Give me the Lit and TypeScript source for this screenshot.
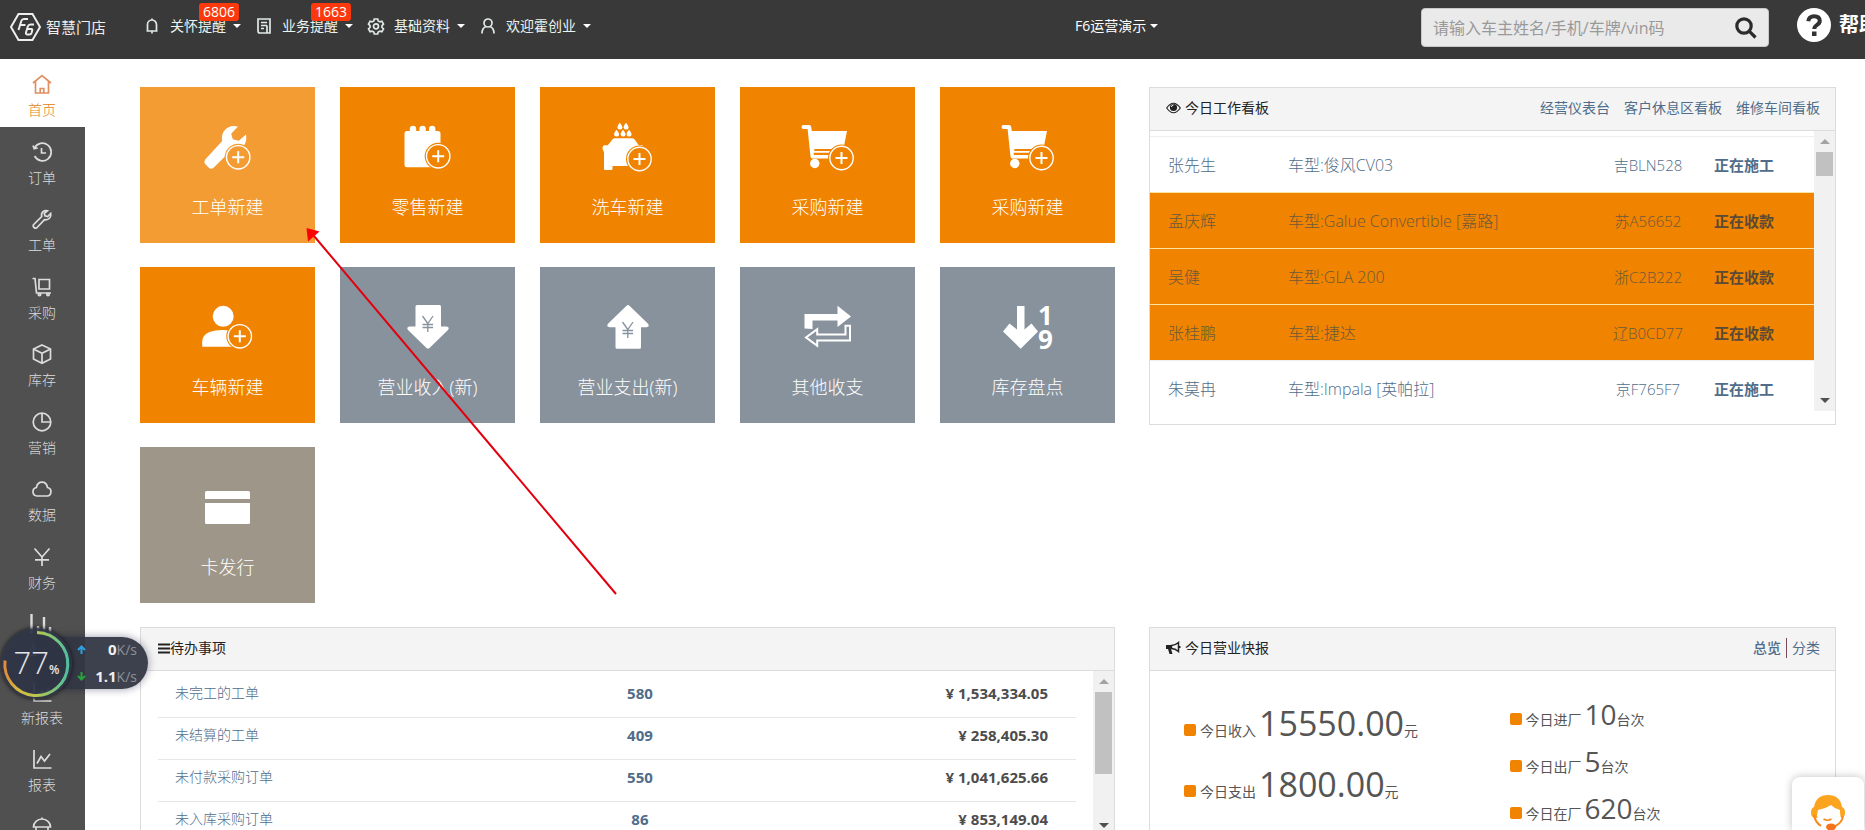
import { LitElement, html, svg, css } from "lit";
import { customElement } from "lit/decorators.js";
import { classMap } from "lit/directives/class-map.js";

const plus = (cx: number, cy: number) => svg`
  <circle class="knock" cx=${cx} cy=${cy} r="13.5"></circle>
  <circle class="ring" cx=${cx} cy=${cy} r="11.7"></circle>
  <path class="ring bold" d="M${cx - 6} ${cy}h12M${cx} ${cy - 6}v12"></path>`;

const cart = svg`
  <path d="M5.5 0H11q1.8 0 2.2 1.8L13.8 6H49l-3.6 18H16.2l.2 2H33v1.8H15.5L16 30h20v3.6H15q-2.2 0-2.5-2.2L9.6 4H5.5a2 2 0 0 1 0-4z"></path>
  <circle cx="16.8" cy="38.5" r="4.7"></circle>${plus(43.5, 33)}`;

const tileIcons: Record<string, unknown> = {
  wrench: svg`<path d="M40 1.6C31-1.5 22 6 24.2 16L7.2 34.4q-1.8 2.4 0 4.6l3.6 3.8q2.4 2 4.8 0L33 25.6C43 27.5 50 19 48 9.6L40.8 15.8 34.8 14.3 33.2 8.8z"></path>${plus(40.2, 32.3)}`,
  retail: svg`<path d="M9 6h2.8V4a3.2 3.2 0 0 1 6.4 0v2h3.2V4a3.2 3.2 0 0 1 6.4 0v2h3.2V4a3.2 3.2 0 0 1 6.4 0v2H40q2.5 0 2.5 2.5v31.3q0 2.5-2.5 2.5H9q-2.5 0-2.5-2.5V8.5Q6.5 6 9 6z"></path>${plus(40.2, 31.3)}`,
  wash: svg`<path d="M17 13.3h17q1.6 0 2.6 1.3l4.2 5.7H44q1.5 0 1.5 2l-1 2V41H14.5v3q0 1-1 1H7q-1 0-1-1V27l-1.5-3q0-3.7 2-3.7h3.3l4.6-5.7q1-1.3 2.6-1.3z"></path>
    <path d="M21.8-2.2q2.6 3 2.6 4.2a2.3 2.3 0 0 1-5 0q0-1.4 2.4-4.2zM28-2.2q2.6 3 2.6 4.2a2.3 2.3 0 0 1-5 0q0-1.4 2.4-4.2zM18.5 4.8q2.6 3 2.6 4.2a2.3 2.3 0 0 1-5 0q0-1.4 2.4-4.2zM25 4.8q2.6 3 2.6 4.2a2.3 2.3 0 0 1-5 0q0-1.4 2.4-4.2zM31 4.8q2.6 3 2.6 4.2a2.3 2.3 0 0 1-5 0q0-1.4 2.4-4.2z"></path>${plus(41.5, 34)}`,
  cart,
  person: svg`<circle cx="25.2" cy="11.3" r="10.5"></circle><path d="M4.2 41.7V37q0-12 21-12 16 0 16 10v6.7z"></path>${plus(41.8, 31.3)}`,
  down: svg`<path d="M19 0h22.5q1.5 0 1.5 1.5V21.5h5.5q3.5.5 1.5 3.5L31.5 43q-1.5 1.2-3 0L10 25q-2-3 1.5-3.5h6V1.5Q17.5 0 19 0z"></path><path class="mark" d="M24.5 11l5.3 7.5L35 11M24.5 19.5h10.6M24.5 22.5h10.6M29.8 18.5V27"></path>`,
  up: svg`<path d="M19 43.7h22.5q1.5 0 1.5-1.5V22.2h5.5q3.5-.5 1.5-3.5L31.5.7q-1.5-1.2-3 0L10 18.7q-2 3 1.5 3.5h6v20q0 1.5 1.5 1.5z"></path><path class="mark" d="M24.5 17l5.3 7.5L35 17M24.5 25.5h10.6M24.5 28.5h10.6M29.8 24.5V33"></path>`,
  loop: svg`<path d="M6.5 9H39.5V.7L53 11.5 39.5 22v-6.5H14.5V24l-8-.5z"></path><path class="line" d="M47.5 20.8v8.7H19.2v-5.2L8 32.4l11.2 8.3v-5.1H52V20.8z"></path>`,
  sort: svg`<path d="M19 1h7.5v23.5l7-6L40 26.5 22.7 43.7 5 26.5l6.5-8 7.500 6z"></path><text class="digit" x="40" y="20">1</text><text class="digit" x="40" y="44">9</text>`,
  card: svg`<path d="M8.5 6h42q1.5 0 1.5 1.5V14H7V7.5Q7 6 8.500 6zM7 18h45v19.5q0 1.5-1.5 1.5h-42Q7 39 7 37.5z"></path>`,
};

const tiles = [
  { label: "工单新建", icon: "wrench", tone: "light" },
  { label: "零售新建", icon: "retail", tone: "orange" },
  { label: "洗车新建", icon: "wash", tone: "orange" },
  { label: "采购新建", icon: "cart", tone: "orange" },
  { label: "采购新建", icon: "cart", tone: "orange" },
  { label: "车辆新建", icon: "person", tone: "orange" },
  { label: "营业收入(新)", icon: "down", tone: "slate" },
  { label: "营业支出(新)", icon: "up", tone: "slate" },
  { label: "其他收支", icon: "loop", tone: "slate" },
  { label: "库存盘点", icon: "sort", tone: "slate" },
  { label: "卡发行", icon: "card", tone: "taupe" },
];

const side = [
  { label: "首页", icon: svg`<path d="M1 9l9-7.5L19 9M3.5 7.5V19h13V7.5M8.2 19v-4.5h3.6V19"></path>` },
  { label: "订单", icon: svg`<path d="M2.5 6.2A8.8 8.8 0 1 1 2.6 14M1 3.5l1.2 3.2 3.5-.7M9.5 6v5h4.5"></path>` },
  { label: "工单", icon: svg`<path d="M15.5 1.8c-3.2-1-6.8 1.5-5.8 5.7L1.3 16q-.5 1.5.7 2.5t2.5.5L12.5 10.7c4 .7 7.2-2.5 6.2-6.2l-3 3-2.8-.8-.6-2.3z"></path>` },
  { label: "采购", icon: svg`<path d="M.5 1.5h2.5l1.5 14.5h14.5M7 2.5h10.5v9.5H7z"></path><circle cx="7.5" cy="17.5" r="1.2"></circle><circle cx="16" cy="17.5" r="1.2"></circle>` },
  { label: "库存", icon: svg`<path d="M10 1l8.5 4v10L10 19.2 1.5 15V5zM1.5 5l8.5 4.2L18.5 5M10 9.2v10"></path>` },
  { label: "营销", icon: svg`<circle cx="10" cy="10" r="8.8"></circle><path d="M10 1.2V10h8.800"></path>` },
  { label: "数据", icon: svg`<path d="M5 17a4.3 4.3 0 0 1-.6-8.5Q5.5 3.2 10 3.2t5.5 5.3A4.3 4.3 0 0 1 15 17z"></path>` },
  { label: "财务", icon: svg`<path d="M2.5 1.5L10 10l7.500-8.500M10 10v9M3 12.800h14"></path>` },
  { label: "业绩", icon: svg`<path stroke-width="2.400" d="M-.5 0v19M6 12v7M12 3v16M18 13v6"></path>` },
  { label: "新报表", icon: svg`<path d="M2 1v18h17.5M6 14l4-5 3 3 5-7"></path>` },
  { label: "报表", icon: svg`<path d="M2 1v18h17.5M5 14.5l4-7 3.5 4.5 5.5-7"></path>` },
  { label: "", icon: svg`<path d="M1.5 10a8.5 8 0 0 1 17 0zM10 2V.5M4 10v7h12v-7"></path>` },
];

const board = [
  { name: "张先生", model: "车型:俊风CV03", plate: "吉BLN528", status: "正在施工", due: false },
  { name: "孟庆辉", model: "车型:Galue Convertible [嘉路]", plate: "苏A56652", status: "正在收款", due: true },
  { name: "吴健", model: "车型:GLA 200", plate: "浙C2B222", status: "正在收款", due: true },
  { name: "张桂鹏", model: "车型:捷达", plate: "辽B0CD77", status: "正在收款", due: true },
  { name: "朱莫冉", model: "车型:Impala [英帕拉]", plate: "京F765F7", status: "正在施工", due: false },
];

const todos = [
  ["未完工的工单", "580", "1,534,334.05"],
  ["未结算的工单", "409", "258,405.30"],
  ["未付款采购订单", "550", "1,041,625.66"],
  ["未入库采购订单", "86", "853,149.04"],
];

const menus = [
  { label: "关怀提醒", badge: "6806", icon: svg`<path d="M3.5 13V6.500a4.500 4.500 0 0 1 9 0V13M2.500 13h11M8 13v2.500M8 2V.5"></path>` },
  { label: "业务提醒", badge: "1663", icon: svg`<path d="M2 1h12v14H4q-2 0-2-2zM5 4.500h6M5 7.500h6M5 10.500h3M11 7.500V15"></path>` },
  { label: "基础资料", badge: "", icon: svg`<path d="M6.300 1h3.400l.5 2 1.700.9 2-.6 1.600 2.800-1.500 1.500v1.800l1.500 1.500-1.600 2.800-2-.6-1.700.9-.5 2H6.300l-.5-2-1.700-.9-2 .6L.5 10.900 2 9.400V7.600L.5 6.100l1.600-2.800 2 .6L5.800 3z"></path><circle cx="8" cy="8.300" r="2.500"></circle>` },
  { label: "欢迎霍创业", badge: "", icon: svg`<path d="M2 15.500q0-5.500 4-7M14 15.500q0-5.500-4-7"></path><circle cx="8" cy="5" r="4"></circle>` },
];

@customElement("scroll-rail")
export class ScrollRail extends LitElement {
  static styles = css`
    :host { display: flex; flex-direction: column; flex: none; width: 21px; background: #f1f1f1; }
    .cap { display: grid; place-items: center; height: 21px; flex: none; }
    .up, .down { border: 5px solid transparent; width: 0; height: 0; box-sizing: border-box; }
    .up { border-top: 0; border-bottom-color: #a3a3a3; }
    .down { border-bottom: 0; border-top-color: #505050; }
    .track { flex: 1; min-height: 0; padding: 0 2px; }
    .thumb { background: #c1c1c1; }
  `;
  static properties = { thumb: { type: Number } };
  declare thumb: number;
  render() {
    return html`<div class="cap"><div class="up"></div></div>
      <div class="track"><div class="thumb" style="height:${this.thumb}%"></div></div>
      <div class="cap"><div class="down"></div></div>`;
  }
}

@customElement("app-root")
export class AppRoot extends LitElement {
  static styles = css`
    :host {
      display: block; position: relative; height: 100vh; overflow: hidden; background: #fff; color: #333;
      font: 14px/20px "Open Sans", "Noto Sans CJK SC", sans-serif;
    }
    * { box-sizing: border-box; }
    a { color: #4f6d8a; text-decoration: none; }
    svg { display: block; overflow: visible; }
    button { font: inherit; border: 0; padding: 0; background: none; color: inherit; cursor: pointer; }
    table { border-collapse: collapse; width: 100%; table-layout: fixed; }
    th { font-weight: inherit; text-align: left; }
    td, th { padding: 0; }

    .top { display: grid; grid-template-columns: 1075fr 346fr 444px; height: 59px; background: #393939; color: #fff; overflow: hidden; }
    .left { display: flex; }
    .brand { display: flex; align-items: center; gap: 5px; height: 54px; padding-left: 10px; width: 144px; color: #eee; font-size: 15px; }
    .brand svg { fill: none; stroke: #eee; stroke-width: 2; }
    .menu { position: relative; display: flex; align-items: center; height: 52px; margin-right: 15px; color: #eaf3ee; }
    .menu .glyph { fill: none; stroke: #dfeae5; stroke-width: 1.7; margin-right: 10px; }
    .caret { width: 0; height: 0; border: 4px solid transparent; border-top-color: #fff; border-bottom: 0; margin-left: 7px; }
    .title .caret { margin-left: 4px; }
    .badge { position: absolute; right: 2px; top: 3px; padding: 0 4px; border-radius: 3px; background: #fb390d; color: #fff; line-height: 18px; }
    .title { display: flex; align-items: center; height: 52px; }
    .right { display: flex; white-space: nowrap; padding-top: 8px; }
    .search { display: flex; align-items: center; width: 348px; height: 39px; flex: none; border: 1px solid #c8c8c8; border-radius: 4px; background: #eaeaea; padding: 0 11px; }
    .search input { flex: 1; min-width: 0; border: 0; outline: 0; background: none; font: 16px/24px "Open Sans", "Noto Sans CJK SC", sans-serif; padding: 0; color: #333; }
    .search input::placeholder { color: #999; opacity: 1; }
    .help { display: flex; align-items: center; gap: 8px; height: 34px; margin-left: 28px; color: #fff; font-size: 20px; font-weight: 700; }

    .shell { display: flex; align-items: flex-start; }
    .side { flex: none; width: 85px; height: 810px; display: flex; flex-direction: column; background: #505050; font-weight: 300; }
    .side a { flex: 1; display: flex; flex-direction: column; align-items: center; gap: 6px; padding: 15px 1px 0 0; color: #dcdcdc; min-height: 0; }
    .side svg { fill: none; stroke: currentColor; stroke-width: 1.7; }
    .side a.on { background: #fff; color: #df8118; }
    .side a.on svg { stroke: #e09062; }

    .main { flex: 1; min-width: 0; display: grid; grid-template-columns: 975fr 687fr; gap: 24px 34px; align-items: start; padding: 28px 29px 0 55px; }
    .tiles { display: grid; grid-template-columns: repeat(5, 1fr); gap: 24px 25px; }
    .tile { --tile: #f08300; display: flex; flex-direction: column; align-items: center; gap: 20px; height: 156px; padding-top: 38px; background: var(--tile); color: #fff; font-size: 18px; line-height: 24px; font-weight: 300; }
    .tile.light { --tile: #f39c33; }
    .tile.slate { --tile: #88929c; }
    .tile.taupe { --tile: #9e9789; }
    .tile svg { fill: #fff; }
    .knock { fill: var(--tile); }
    .ring { fill: none; stroke: #fff; stroke-width: 1.4; }
    .ring.bold { stroke-width: 2; }
    .mark { fill: none; stroke: var(--tile); stroke-width: 1.3; }
    .line { fill: none; stroke: #fff; stroke-width: 2; }
    .digit { font: 700 26px "Open Sans", sans-serif; }

    .panel { border: 1px solid #dcdcdc; background: #fff; min-width: 0; }
    .head { display: flex; align-items: center; justify-content: space-between; height: 43px; padding: 0 15px 2px 16px; background: #f4f4f4; border-bottom: 1px solid #dcdcdc; }
    .head h2 { display: flex; align-items: center; gap: 4px; margin: 0; font: inherit; color: #222; }
    .links { display: flex; gap: 14px; }
    .split { display: flex; gap: 5px; }
    .split i { width: 1px; height: 20px; background: #7c4a5a; }
    .split b { font-weight: 500; }
    .scroll { display: flex; }
    .view { flex: 1; min-width: 0; overflow: hidden; }

    .board .scroll { height: 280px; margin-bottom: 13px; }
    .board .view { padding-top: 5px; font-size: 16px; font-weight: 300; color: #4f6d8a; }
    .board tr { height: 56px; border-top: 1px solid #eeeeee; white-space: nowrap; }
    .board tr.due { background: #f08300; color: #6b5a3c; border-top-color: #f9e3a8; }
    .board th { padding-left: 18px; }
    .plate { font-size: 15px; text-align: center; }
    .state { padding-left: 28px; font-size: 15px; font-weight: 700; }
    .due .state { color: #5b4a35; }
    .c1 { width: 138px; } .c3 { width: 76px; } .c4 { width: 128px; }

    .todo .scroll { height: 165px; }
    .todo .view { padding: 5px 17px 0; }
    .todo .head { padding-left: 17px; }
    .todo .head h2 { gap: 0; }
    .todo tr { border-bottom: 1px solid #e6e8e8; }
    .todo td, .todo th { padding-top: 7px; padding-bottom: 14px; line-height: 20px; }
    .todo th { width: 40%; padding-left: 17px; font-weight: 300; }
    .count { width: 25%; text-align: center; font-size: 15px; font-weight: 700; }
    .sum { text-align: right; font-size: 15px; font-weight: 700; color: #4c4c4c; }
    .todo td.sum { padding-right: 28px; }

    .report { display: grid; grid-template-columns: 1fr 1fr; padding: 23px 0 0 34px; color: #555; height: 165px; }
    .report p { display: flex; align-items: baseline; margin: 0; }
    .report p::before { content: ""; width: 12px; height: 12px; border-radius: 2px; background: #f08300; margin-right: 4px; }
    .money p { height: 61px; line-height: 58px; }
    .money b { font-size: 34px; }
    .cars p { height: 47px; line-height: 40px; }
    .cars b { font-size: 28px; }
    .report b { font-weight: 400; margin-left: 3px; }

    .pointer { position: absolute; left: 300px; top: 220px; pointer-events: none; }
    .meter { position: absolute; left: 0; top: 628px; width: 148px; height: 71px; }
    .pill { position: absolute; left: 36px; right: 0; top: 9px; height: 52px; border-radius: 0 26px 26px 0; background: #333743f2; box-shadow: 0 0 8px #00003066; color: #8e929b; display: grid; grid-template-columns: 14px 1fr; align-content: center; padding: 0 11px 0 41px; line-height: 26px; }
    .pill span { text-align: right; }
    .pill b { color: #f0f0f0; font-size: 15px; }
    .pill svg { align-self: center; }
    .dial { position: absolute; left: 1px; top: 0; width: 71px; height: 71px; border-radius: 50%; background: #2f3446ee; box-shadow: 0 0 4px #101018; display: flex; align-items: baseline; justify-content: center; color: #e4e6ea; font-size: 31px; font-weight: 300; line-height: 69px; }
    .dial small { font-size: 12px; font-weight: 600; }
    .dial svg { position: absolute; inset: 0; fill: none; stroke-width: 3; }
    .service { position: absolute; right: 1px; bottom: 0; width: 72px; height: 53px; border-radius: 8px 8px 0 0; background: #fff; box-shadow: 0 0 8px #00000040; display: grid; justify-items: center; padding-top: 16px; }
  `;

  render() {
    return html`
      <header class="top">
        <div class="left">
          <div class="brand">
            <svg width="31" height="30" viewBox="0 0 31 30"><path d="M8.5 2h14L30 15l-7.5 13h-14L1 15z"></path><path d="M18 7h-4q-2 0-2.7 2L8.5 18M10.5 13h5M24 12.5h-3.5q-2 0-2.7 2L16 20.5q-.5 2 1.5 2h2q1.500 0 2-1.500l.7-2.500q.4-1.500-1-1.500h-4"></path></svg>
            <span>智慧门店</span>
          </div>
          ${menus.map((m) => html`<button class="menu"><svg class="glyph" width="16" height="16" viewBox="0 0 16 16">${m.icon}</svg>${m.label}<i class="caret"></i>${m.badge ? html`<span class="badge">${m.badge}</span>` : ""}</button>`)}
        </div>
        <button class="title">F6运营演示<i class="caret"></i></button>
        <div class="right">
          <div class="search">
            <input aria-label="搜索" placeholder="请输入车主姓名/手机/车牌/vin码" />
            <button aria-label="搜索"><svg width="22" height="22" viewBox="0 0 22 22" fill="none" stroke="#2b2b2b" stroke-width="3.2"><circle cx="9" cy="9" r="7.2"></circle><path d="M14.2 14.2L20.5 20.5"></path></svg></button>
          </div>
          <a class="help" href="#"><svg width="34" height="34" viewBox="0 0 34 34"><circle cx="17" cy="17" r="17" fill="#fff"></circle><path d="M11.3 13.2q.6-5 5.9-5t5.6 4.6q0 2.6-3 4.3-2.5 1.5-2.5 4" fill="none" stroke="#333" stroke-width="4"></path><path d="M15 23.5h4.5V28H15z" fill="#333"></path></svg>帮助</a>
        </div>
      </header>
      <div class="shell">
        <nav class="side">
          ${side.map((s, i) => html`<a href="#" aria-label=${s.label || "更多"} class=${classMap({ on: i === 0 })}><svg width="20" height="20" viewBox="0 0 20 20">${s.icon}</svg>${s.label}</a>`)}
        </nav>
        <main class="main">
          <div class="tiles">
            ${tiles.map((t) => html`<button class="tile ${t.tone}"><svg width="60" height="50" viewBox="0 0 60 50">${tileIcons[t.icon]}</svg>${t.label}</button>`)}
          </div>
          <section class="panel board">
            <div class="head">
              <h2><svg width="15" height="12" viewBox="0 0 15 12"><path d="M.7 6q6.8-9.5 13.6 0-6.8 9.5-13.6 0z" fill="none" stroke="#222" stroke-width="1.2"></path><circle cx="7.5" cy="5.5" r="3.6" fill="#222"></circle><path d="M5.5 5a2 2 0 0 1 2-2" fill="none" stroke="#fff"></path></svg>今日工作看板</h2>
              <div class="links"><a href="#">经营仪表台</a><a href="#">客户休息区看板</a><a href="#">维修车间看板</a></div>
            </div>
            <div class="scroll">
              <div class="view">
                <table>
                  <colgroup><col class="c1" /><col /><col class="c3" /><col class="c4" /></colgroup>
                  ${board.map((r) => html`<tr class=${classMap({ due: r.due })}><th scope="row">${r.name}</th><td>${r.model}</td><td class="plate">${r.plate}</td><td class="state">${r.status}</td></tr>`)}
                </table>
              </div>
              <scroll-rail .thumb=${10}></scroll-rail>
            </div>
          </section>
          <section class="panel todo">
            <div class="head">
              <h2><svg width="12" height="11" viewBox="0 0 12 11"><path d="M0 1.5h12M0 5.5h12M0 9.5h12" stroke="#222" stroke-width="2"></path></svg>待办事项</h2>
            </div>
            <div class="scroll">
              <div class="view">
                <table>
                  ${todos.map((r) => html`<tr><th scope="row"><a href="#">${r[0]}</a></th><td class="count"><a href="#">${r[1]}</a></td><td class="sum">¥ ${r[2]}</td></tr>`)}
                </table>
              </div>
              <scroll-rail .thumb=${67}></scroll-rail>
            </div>
          </section>
          <section class="panel">
            <div class="head">
              <h2><svg width="15" height="14" viewBox="0 0 15 14"><path d="M12.5 1.5v9Q9 7.5 5.5 7.5V4.5q3.5 0 7-3z" fill="none" stroke="#222" stroke-width="1.5"></path><path d="M0 4h6v4H0zM2 8h3l1.5 5H3.5zM13 5h1.5v2H13z" fill="#222"></path></svg>今日营业快报</h2>
              <div class="split"><a href="#"><b>总览</b></a><i></i><a href="#">分类</a></div>
            </div>
            <div class="report">
              <div class="money"><p>今日收入<b>15550.00</b>元</p><p>今日支出<b>1800.00</b>元</p></div>
              <div class="cars"><p>今日进厂<b>10</b>台次</p><p>今日出厂<b>5</b>台次</p><p>今日在厂<b>620</b>台次</p></div>
            </div>
          </section>
        </main>
      </div>
      <svg class="pointer" width="320" height="380" viewBox="0 0 320 380"><path d="M316 374L14 16" stroke="#e2000f" stroke-width="2"></path><path d="M6.5 8l13 3.5L8 21.5z" fill="#f00"></path></svg>
      <div class="meter">
        <div class="pill">
          <svg width="9" height="9" viewBox="0 0 9 9" fill="none" stroke="#2e9fe0" stroke-width="2"><path d="M4.5 9V1.5M1 5l3.5-3.5L8 5"></path></svg><span><b>0</b>K/s</span>
          <svg width="9" height="9" viewBox="0 0 9 9" fill="none" stroke="#27a23c" stroke-width="2"><path d="M4.5 0v7.5M1 4l3.5 3.5L8 4"></path></svg><span><b>1.1</b>K/s</span>
        </div>
        <div class="dial">77<small>%</small>
          <svg viewBox="0 0 71 71"><defs><linearGradient id="ring" x1="0" y1="0" x2="1" y2="0"><stop offset="0" stop-color="#e08a3c"></stop><stop offset=".2" stop-color="#d8b840"></stop><stop offset=".5" stop-color="#b9c84e"></stop><stop offset="1" stop-color="#4fbf9e"></stop></linearGradient></defs><path d="M36 4.5a31.5 31.5 0 1 1-32 28" stroke="url(#ring)"></path></svg>
        </div>
      </div>
      <button class="service" aria-label="在线客服">
        <svg width="38" height="40" viewBox="0 0 38 40"><path d="M5.5 25Q2 24 2 19.5t3-5.5Q7 2 19 2t14 12q3 1 3 5.5T32.5 25Q31 24 31 17q-5-1-9-5-6 4-13 5-1.5 5-.5 8z" fill="#fba41f"></path><path d="M34 23q-1 8-10 11M5 22q1 7 7 11" fill="none" stroke="#f58b1f" stroke-width="2"></path><path d="M14.5 26q4 2.5 8 0" fill="none" stroke="#f58b1f" stroke-width="1.5"></path><ellipse cx="22" cy="34" rx="5" ry="3.5" fill="#f4731c"></ellipse></svg>
      </button>
    `;
  }
}
